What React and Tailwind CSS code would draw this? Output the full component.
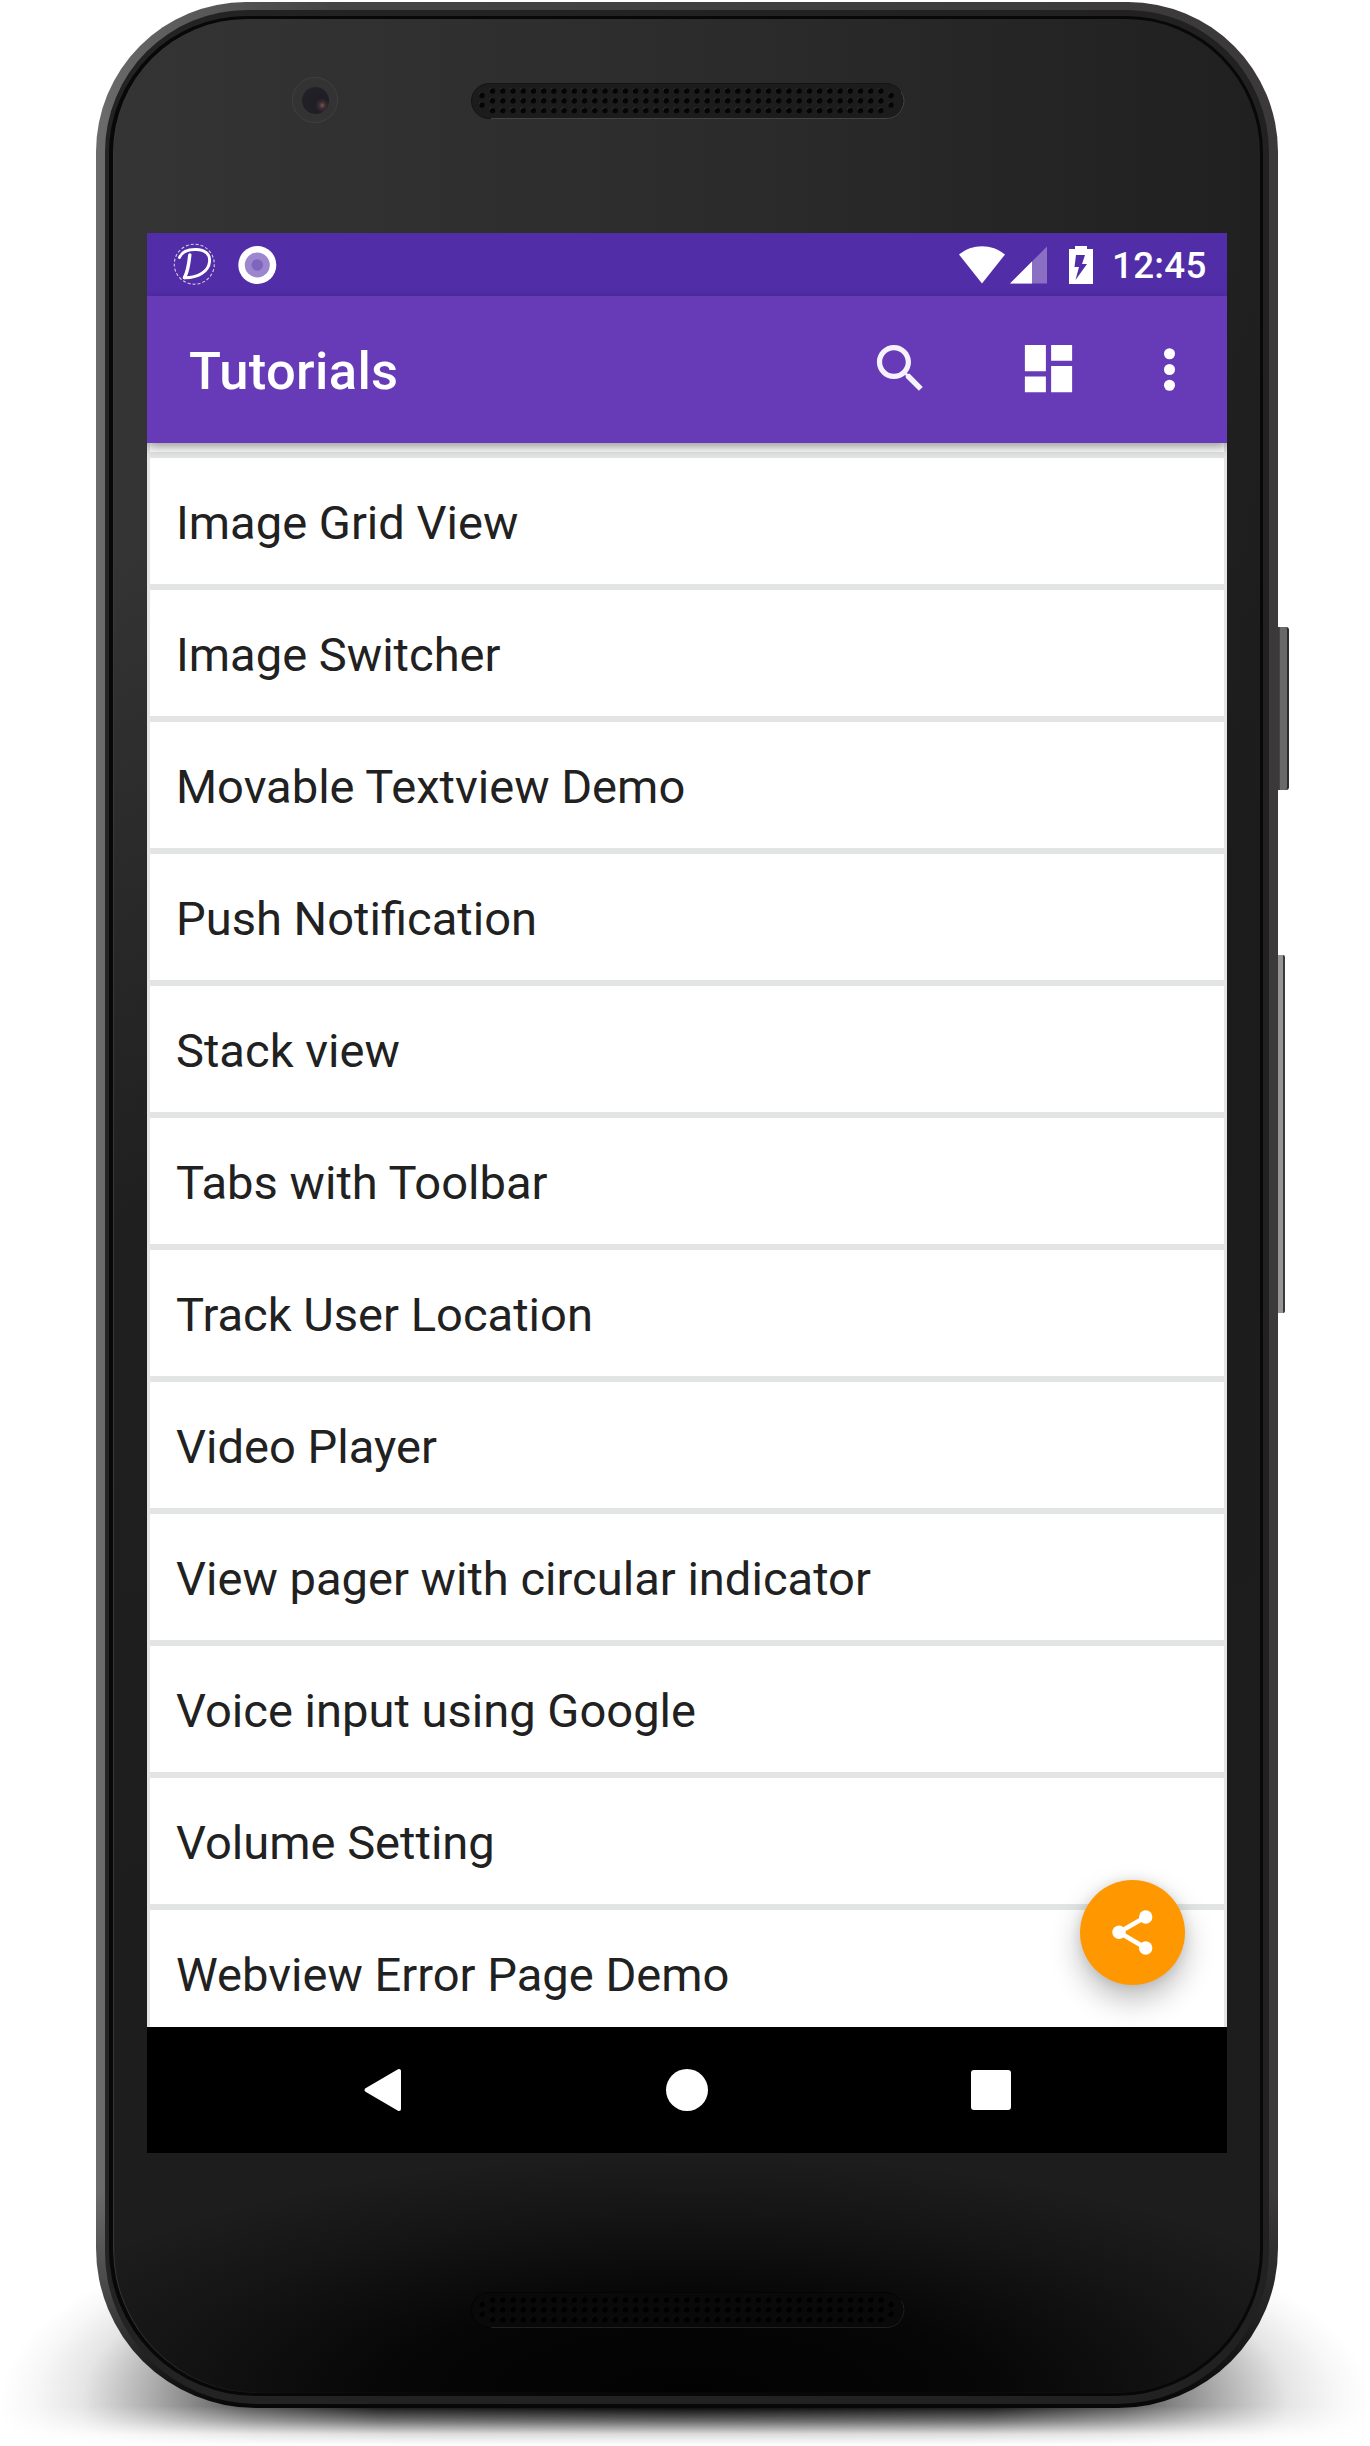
const items = [
  "Image Grid View",
  "Image Switcher",
  "Movable Textview Demo",
  "Push Notification",
  "Stack view",
  "Tabs with Toolbar",
  "Track User Location",
  "Video Player",
  "View pager with circular indicator",
  "Voice input using Google",
  "Volume Setting",
  "Webview Error Page Demo",
];

function Grille({ dim }) {
  const dots = [];
  for (let i = 0; i < 39; i++) {
    for (let r = 0; r < 3; r++) dots.push([21.5 + i * 10.22, 8 + r * 9.8]);
  }
  [11, 420].forEach((x) => dots.push([x, 12.5], [x, 22]));
  return (
    <svg width="434" height="36" viewBox="0 0 434 36" className="block">
      <rect x="0.5" y="0.5" width="432" height="35" rx="17.5" fill={dim ? "#090909" : "#1c1c1c"} stroke={dim ? "#040404" : "#141414"} />
      <path d="M20 35.5H415a17.500 17.500 0 0 0 15-27" fill="none" stroke={dim ? "#202020" : "#444"} strokeWidth="1" />
      {dots.map(([x, y], i) => (
        <g key={i}>
          <circle cx={x - 1} cy={y - 1} r="2" fill={dim ? "#151515" : "#3d3d3d"} />
          <circle cx={x} cy={y} r="2.7" fill={dim ? "#000000" : "#050505"} />
        </g>
      ))}
    </svg>
  );
}

function StatusBar() {
  return (
    <div className="flex h-[63px] items-center justify-between bg-[#512da8] pl-[26px] pr-[20px]">
      <div className="flex items-center gap-[21px]">
        <svg width="43" height="43" viewBox="0 0 43 43" fill="none">
          <circle cx="21.3" cy="21.2" r="20" stroke="#d6cdec" strokeWidth="1.100" strokeDasharray="3 2" />
          <path d="M6.500 14.500C9 8.500 16 6.300 23 6.500C32 6.700 37.500 11 36.500 19C35.500 28.500 25 35 11.500 34.800" stroke="#fff" strokeWidth="2.900" strokeLinecap="round" />
          <path d="M16.800 12C16 20 15 28 11.500 34.500" stroke="#fff" strokeWidth="3.400" strokeLinecap="round" />
        </svg>
        <svg width="40" height="40" viewBox="0 0 40 40">
          <circle cx="20.300" cy="20" r="19" fill="#fff" />
          <circle cx="20.300" cy="20" r="12.500" fill="#9c86ce" />
          <circle cx="20.300" cy="20" r="5.800" fill="#8065bd" />
        </svg>
      </div>
      <div className="flex items-center">
        <svg width="46" height="38" viewBox="0 0 46 38" fill="#fff">
          <path d="M0 8.500C13-2.600 33-2.600 46 8.500L23 37.500z" />
        </svg>
        <svg width="37" height="38" viewBox="0 0 37 38" className="ml-[5px]">
          <path d="M37 .5V37.500H0z" fill="#8b6fc3" />
          <path d="M22 15.500V37.500H0z" fill="#fff" />
        </svg>
        <svg width="24" height="38" viewBox="0 0 24 38" className="ml-[22px]">
          <path d="M0 3H6V0H18V3H24V38H0z" fill="#fff" />
          <path d="M7 9H16L13 18H18L6.500 34L10 21H5.500z" fill="#512da8" />
        </svg>
        <span className="ml-[19px] w-[95px] pt-[3px] text-[36.75px] leading-none font-medium tracking-[0.3px] text-white">12:45</span>
      </div>
    </div>
  );
}

function Toolbar() {
  return (
    <div className="relative z-10 flex h-[147px] items-center bg-[#673ab7] pl-[42px] pr-[26px] shadow-[0_4px_10px_rgba(0,0,0,0.4)]">
      <h1 className="flex-1 pt-[4px] text-[52.5px] leading-none font-medium tracking-[0.35px] text-white">Tutorials</h1>
      <svg width="63" height="63" viewBox="0 0 24 24" fill="#f6f2fb" className="mb-[2px]">
        <path d="M15.500 14h-.79l-.28-.27C15.410 12.590 16 11.110 16 9.500 16 5.910 13.090 3 9.500 3S3 5.910 3 9.500 5.910 16 9.500 16c1.610 0 3.090-.59 4.230-1.570l.27.28v.79l5 4.990L20.490 19l-4.990-5zm-6 0C7.010 14 5 11.990 5 9.500S7.010 5 9.500 5 14 7.010 14 9.500 11.990 14 9.500 14z" />
      </svg>
      <svg width="63" height="63" viewBox="0 0 24 24" fill="#fff" className="mb-[2px] ml-[85px]">
        <path d="M3 13h8V3H3v10zm0 8h8v-6H3v6zm10 0h8V11h-8v10zm0-18v6h8V3h-8z" />
      </svg>
      <svg width="63" height="63" viewBox="0 0 24 24" fill="#fff" className="ml-[58px]">
        <circle cx="12" cy="6" r="2.100" />
        <circle cx="12" cy="12" r="2.100" />
        <circle cx="12" cy="18" r="2.100" />
      </svg>
    </div>
  );
}

function Screen() {
  return (
    <div className="relative flex h-[1920px] w-[1080px] flex-col overflow-hidden bg-[#e3e5e4]">
      <StatusBar />
      <Toolbar />
      <ul className="flex h-[1584px] flex-col gap-[6px] overflow-hidden px-[3px]">
        <li className="h-[9px] shrink-0 bg-white" />
        {items.map((t) => (
          <li key={t} className="flex h-[126px] shrink-0 items-center bg-white px-[26px] pt-[2px] text-[47.1px] leading-[47px] text-[#212121]">
            {t}
          </li>
        ))}
      </ul>
      <button className="absolute right-[42px] bottom-[168px] size-[105px] rounded-full bg-[#ff9800] shadow-[0_14px_30px_rgba(0,0,0,0.27),0_0_12px_rgba(0,0,0,0.1)]">
        <svg width="105" height="105" viewBox="0 0 105 105" fill="#fff">
          <path d="M65.700 37L39 52.300L65.700 68" fill="none" stroke="#fff" strokeWidth="4.600" />
          <circle cx="39" cy="52.300" r="6.700" />
          <circle cx="65.700" cy="37" r="6.700" />
          <circle cx="65.700" cy="68" r="6.700" />
        </svg>
      </button>
      <nav className="relative z-10 flex h-[126px] items-center justify-between bg-black pl-[214px] pr-[216px]">
        <svg width="42" height="44" viewBox="0 0 42 44">
          <path d="M5.500 22L38 3V41z" fill="#fff" stroke="#fff" strokeWidth="4" strokeLinejoin="round" />
        </svg>
        <div className="size-[42px] rounded-full bg-white" />
        <div className="size-[40px] rounded-[3px] bg-white" />
      </nav>
    </div>
  );
}

export default function App() {
  return (
    <div className="relative h-[2446px] w-[1370px] overflow-hidden bg-white pt-[2px] pl-[96px] font-[Roboto,sans-serif]">
      <div className="absolute inset-x-0 bottom-0 h-[240px] bg-[radial-gradient(ellipse_685px_225px_at_50%_195px,#000_0%,rgba(0,0,0,0.92)_45%,rgba(0,0,0,0.65)_64%,rgba(0,0,0,0.32)_78%,rgba(0,0,0,0.1)_88%,rgba(0,0,0,0.03)_95%,transparent_100%)] [mask-image:linear-gradient(to_bottom,#000_0,#000_200px,rgba(0,0,0,0.6)_215px,rgba(0,0,0,0.15)_228px,transparent_239px)]" />
      <div className="absolute top-[627px] left-[1274px] h-[163px] w-[15px] rounded-r-[3px] border-r-2 border-[#2c2c2c] bg-linear-to-r from-[#3a3a3a] from-40% to-[#6a6969] to-50%" />
      <div className="absolute top-[955px] left-[1274px] h-[358px] w-[11px] rounded-r-[2px] border-r-2 border-[#3a3a3a] bg-[#969495]" />
      <div className="relative h-[2406px] w-[1182px] rounded-t-[150px] rounded-b-[160px] bg-[linear-gradient(to_bottom,transparent_91%,rgba(0,0,0,0.4)_96%,#070707_100%),linear-gradient(to_right,#6c6b6c_0%,#5b5a5b_8%,#444_20%,#3b393a_100%)] pt-[8px] pr-[9px] pb-[4px] pl-[9px]">
        <div className="h-full rounded-t-[142px] rounded-b-[152px] bg-[linear-gradient(to_right,#242324,#222122)] pt-[6px] pr-[6px] pb-[8px] pl-[4px]">
          <div className="h-full rounded-t-[137px] rounded-b-[147px] bg-[#080808] pt-[3px] pr-[3px] pb-[3px] pl-[4px]">
            <div className="flex h-full flex-col items-center rounded-t-[134px] rounded-b-[144px] bg-[radial-gradient(ellipse_720px_240px_at_50%_100%,#020202_0%,rgba(2,2,2,0.85)_40%,rgba(2,2,2,0.3)_75%,transparent_100%),linear-gradient(165deg,transparent_20%,rgba(26,26,26,0.8)_45%,#1d1d1d_75%),linear-gradient(to_right,#343435,#2c2c2c_50%,#202020)] shadow-[inset_1px_0_1px_#3a3a3a]">
              <header className="flex h-[214px] w-full shrink-0 pt-[58px] pl-[179px]">
                <div className="flex size-[46px] items-center justify-center rounded-full border border-[#404041] bg-[#333334]">
                  <div className="size-[27px] rounded-full bg-[radial-gradient(circle_at_75%_68%,#7a5452_0%,#3a2c32_12%,#201e25_26%,#242228_100%)]" />
                </div>
                <div className="mt-[6px] ml-[133px]">
                  <Grille />
                </div>
              </header>
              <div className="flex w-full shrink-0 justify-start pl-[34px]">
                <Screen />
              </div>
              <footer className="w-full pt-[139px] pl-[358px]">
                <Grille dim />
              </footer>
            </div>
          </div>
        </div>
      </div>
    </div>
  );
}
